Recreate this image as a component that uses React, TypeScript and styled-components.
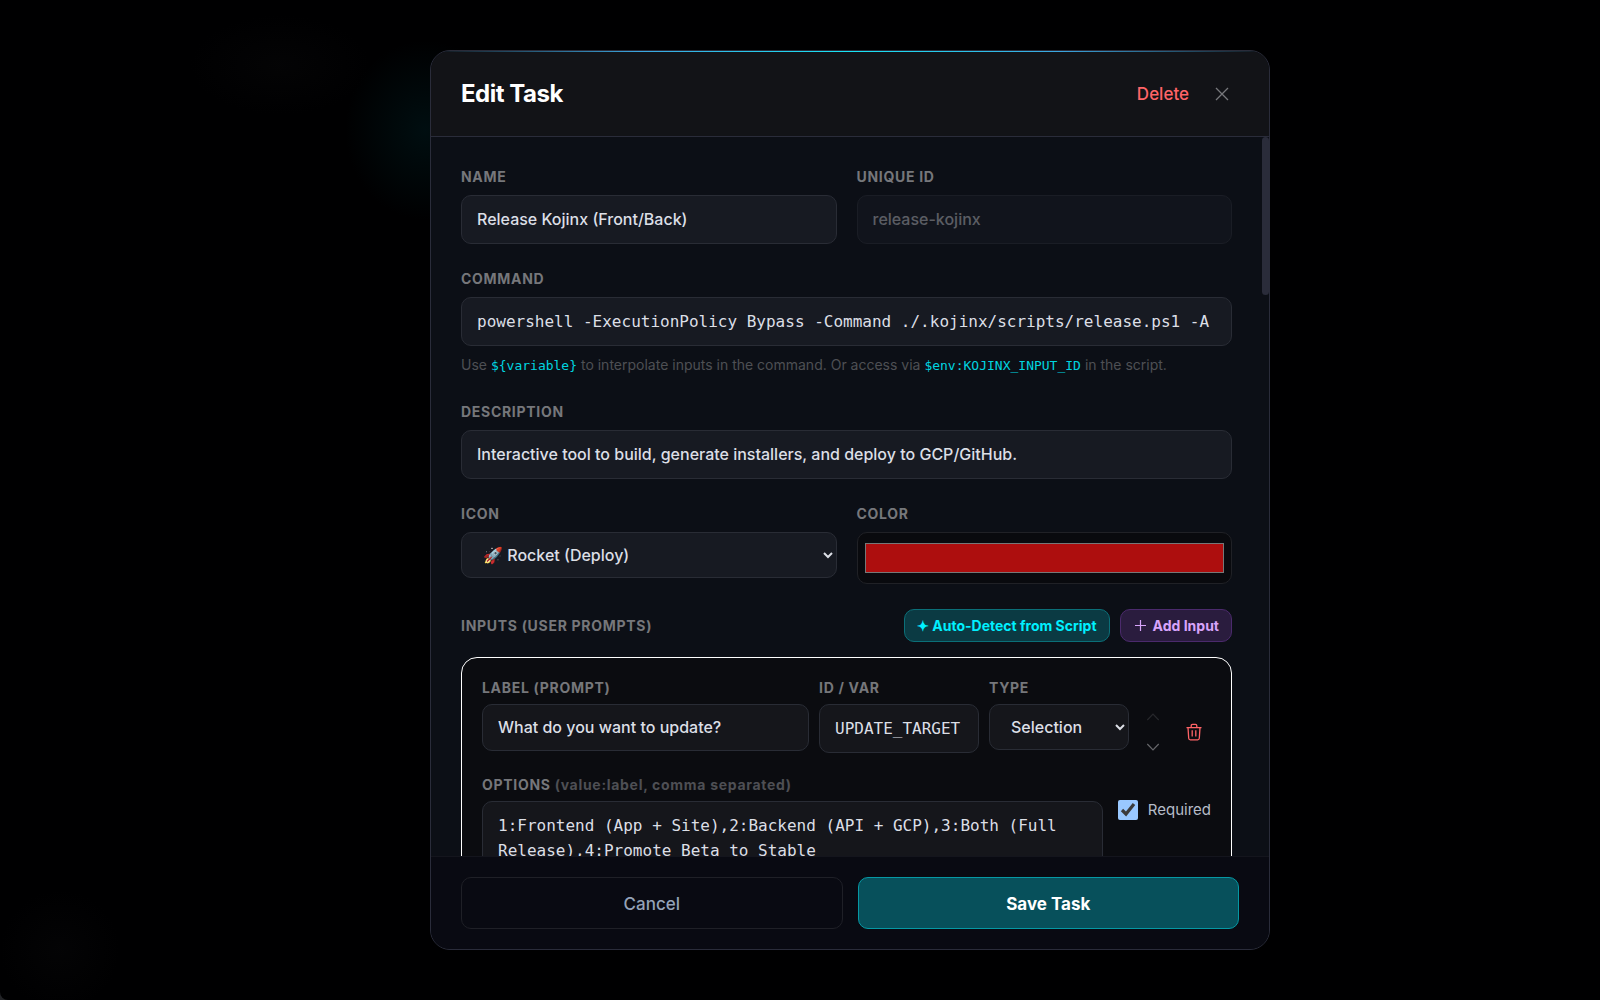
import React from "react";
import styled, { createGlobalStyle, css } from "styled-components";

const sans = `Inter, "Liberation Sans", sans-serif`;
const mono = `"DejaVu Sans Mono", "Liberation Mono", monospace`;

const GlobalStyle = createGlobalStyle`
  *, *::before, *::after { box-sizing: border-box; }
  html, body, #root { height: 100%; }
  body { margin: 0; background: #222326; font-family: ${sans}; color: #e2e4ea; overflow: hidden; }
  button, input, select, textarea { font-family: inherit; margin: 0; }
`;

const Overlay = styled.div`
  height: 100vh;
  padding-left: 100px;
  display: flex;
  align-items: center;
  justify-content: center;
  border-bottom-left-radius: 8px;
  background:
    radial-gradient(ellipse 80px 90px at 425px 130px, rgba(0, 50, 56, 0.28), transparent),
    radial-gradient(ellipse 90px 50px at 280px 65px, rgba(18, 18, 20, 0.2), transparent),
    radial-gradient(ellipse 60px 60px at 60px 950px, rgba(14, 14, 16, 0.25), transparent),
    #000001;
`;

const Modal = styled.form`
  width: min(840px, 100%);
  height: 90vh;
  display: flex;
  flex-direction: column;
  position: relative;
  overflow: hidden;
  border: 1px solid #2a2c3a;
  border-radius: 20px;
  background: #0c0f16;

  &::before {
    content: "";
    position: absolute;
    top: 0;
    left: 0;
    right: 0;
    height: 1px;
    background: linear-gradient(90deg, transparent, #3ba6e0 25%, #17e4f4 50%, #3ba6e0 75%, transparent);
  }
`;

const Header = styled.header`
  flex: none;
  height: 86px;
  padding: 0 37px 0 30px;
  display: flex;
  align-items: center;
  justify-content: space-between;
  background: #121317;
  border-bottom: 1px solid #2a2c3a;
`;

const Title = styled.h2`
  margin: 0;
  font-size: 24px;
  line-height: 32px;
  font-weight: 700;
  letter-spacing: -0.02em;
  color: #fff;
`;

const Row = styled.div<{ $gap?: number; $spread?: boolean }>`
  display: flex;
  align-items: center;
  justify-content: ${(p) => (p.$spread ? "space-between" : "flex-start")};
  gap: ${(p) => p.$gap ?? 10}px;
`;

const PlainButton = styled.button<{ $color: string }>`
  display: flex;
  align-items: center;
  justify-content: center;
  padding: 0;
  border: 0;
  background: none;
  font-size: 17px;
  font-weight: 500;
  color: ${(p) => p.$color};
`;

const BodyFrame = styled.div`
  flex: 1;
  min-height: 0;
  position: relative;
  display: flex;
`;

const Body = styled.div`
  flex: 1;
  min-width: 0;
  overflow-y: auto;
  scrollbar-width: none;
  padding: 30px 37px 30px 30px;
  display: flex;
  flex-direction: column;
  gap: 25px;

  & > * { flex: none; }
`;

const ScrollThumb = styled.div`
  position: absolute;
  top: 0;
  right: 0;
  width: 7px;
  height: 22%;
  border-radius: 4px;
  background: #2a2c3a;
`;

const TwoColumns = styled.div`
  display: grid;
  grid-template-columns: 1fr 1fr;
  gap: 20px;
  align-items: start;
`;

const Field = styled.div<{ $gap?: number }>`
  min-width: 0;
  display: flex;
  flex-direction: column;
  gap: ${(p) => p.$gap ?? 8}px;
`;

const labelText = css`
  font-size: 14px;
  line-height: 20px;
  font-weight: 700;
  letter-spacing: 0.05em;
  color: #76777b;
`;

const Label = styled.label`
  ${labelText}
`;

const Heading = styled.h3`
  ${labelText}
  margin: 0;
`;

const Muted = styled.span`
  color: #4e4f54;
`;

const control = css<{ $height?: number; $mono?: boolean; $inset?: boolean }>`
  width: 100%;
  height: ${(p) => p.$height ?? 49}px;
  padding: 0 15px;
  border: 1px solid #292c35;
  border-radius: 10px;
  outline: none;
  background: ${(p) => (p.$inset ? "#15161b" : "#171a22")};
  color: #dcdfe6;
  font-family: ${(p) => (p.$mono ? mono : sans)};
  font-size: 16px;
  font-weight: 500;
`;

const Input = styled.input`
  ${control}
  padding-bottom: ${(p) => (p.$mono ? 0 : 2)}px;
  &:disabled {
    opacity: 0.5;
    color: #a9abb1;
  }
`;

const Select = styled.select`
  ${control}
  padding: 0 4px 0 17px;
`;

const TextArea = styled.textarea`
  ${control}
  display: block;
  padding: 11px 15px;
  line-height: 25px;
  resize: none;
`;

const ColorInput = styled.input`
  width: 100%;
  height: 52px;
  padding: 6px 5px;
  border: 1px solid #202126;
  border-radius: 10px;
  background: #090a0e;
`;

const Hint = styled.p`
  margin: 0;
  font-size: 14px;
  line-height: 22px;
  color: #4e4f54;
`;

const Code = styled.code`
  font-family: ${mono};
  font-size: 13px;
  color: #00d5e0;
`;

const SmallButton = styled.button<{ $tone: "teal" | "purple" }>`
  height: 33px;
  padding: 0 12px;
  display: flex;
  align-items: center;
  gap: 5px;
  border: 1px solid ${(p) => (p.$tone === "teal" ? "#0b6f78" : "#4b2a6c")};
  border-radius: 10px;
  background: ${(p) => (p.$tone === "teal" ? "#0b3a43" : "#2a1c3e")};
  color: ${(p) => (p.$tone === "teal" ? "#00f0ff" : "#d8a4fb")};
  font-size: 14px;
  font-weight: 700;
`;

const PromptCard = styled.section`
  padding: 20px;
  display: flex;
  flex-direction: column;
  gap: 20px;
  border: 1px solid #fff;
  border-radius: 16px;
  background: #0b0c10;
`;

const PromptGrid = styled.div`
  display: grid;
  grid-template-columns: 1fr 160px 140px 28px 34px;
  column-gap: 10px;
  align-items: start;
`;

const Arrows = styled.div`
  padding-top: 31px;
  display: flex;
  flex-direction: column;
  align-items: center;
  gap: 14px;
`;

const TrashSlot = styled.div`
  padding-top: 45px;
  display: flex;
  justify-content: center;
`;

const OptionsGrid = styled.div`
  display: grid;
  grid-template-columns: 1fr auto;
  gap: 15px;
  align-items: start;
`;

const CheckLabel = styled.label`
  margin-top: 23px;
  display: flex;
  align-items: center;
  gap: 10px;
  font-size: 15px;
  line-height: 24px;
  color: #b6bcc8;
`;

const CheckBox = styled.input`
  width: 20px;
  height: 20px;
  color-scheme: dark;
  accent-color: #99c8ff;
`;

const Footer = styled.footer`
  flex: none;
  padding: 20px 30px;
  display: grid;
  grid-template-columns: 1fr 1fr;
  gap: 15px;
  border-top: 1px solid #14151d;
  background: #090a12;
`;

const FooterButton = styled.button<{ $primary?: boolean }>`
  height: 52px;
  padding: 2px 0 0;
  border: 1px solid ${(p) => (p.$primary ? "#0698a4" : "#1f2027")};
  border-radius: 10px;
  background: ${(p) => (p.$primary ? "#07505b" : "transparent")};
  color: ${(p) => (p.$primary ? "#fff" : "#94a3b8")};
  font-size: 17px;
  font-weight: ${(p) => (p.$primary ? 700 : 500)};
`;

const Icon = styled.svg.attrs({ fill: "none", stroke: "currentColor", "aria-hidden": true })`
  display: block;
  flex: none;
`;

const Chevron = ({ up }: { up?: boolean }) => (
  <Icon width="14" height="16" viewBox="0 0 14 16" strokeWidth="1.2">
    <path d={up ? "M1.3 11 7 5.2 12.7 11" : "M1.3 5 7 10.8 12.7 5"} />
  </Icon>
);

export default function App() {
  return (
    <>
      <GlobalStyle />
      <Overlay>
        <Modal role="dialog" aria-labelledby="title" onSubmit={(e) => e.preventDefault()}>
          <Header>
            <Title id="title">Edit Task</Title>
            <Row $gap={23}>
              <PlainButton type="button" $color="#ff6467">Delete</PlainButton>
              <PlainButton type="button" $color="#77787c" aria-label="Close">
                <Icon width="20" height="20" viewBox="0 0 20 20" strokeWidth="1.3">
                  <path d="M4 4 16 16M16 4 4 16" />
                </Icon>
              </PlainButton>
            </Row>
          </Header>

          <BodyFrame>
            <Body>
              <TwoColumns>
                <Field>
                  <Label htmlFor="name">NAME</Label>
                  <Input id="name" defaultValue="Release Kojinx (Front/Back)" />
                </Field>
                <Field>
                  <Label htmlFor="uid">UNIQUE ID</Label>
                  <Input id="uid" defaultValue="release-kojinx" disabled />
                </Field>
              </TwoColumns>

              <Field>
                <Label htmlFor="command">COMMAND</Label>
                <Input
                  id="command"
                  $mono
                  defaultValue="powershell -ExecutionPolicy Bypass -Command ./.kojinx/scripts/release.ps1 -A"
                />
                <Hint>
                  Use <Code>{"${variable}"}</Code> to interpolate inputs in the command. Or access via{" "}
                  <Code>$env:KOJINX_INPUT_ID</Code> in the script.
                </Hint>
              </Field>

              <Field>
                <Label htmlFor="description">DESCRIPTION</Label>
                <Input
                  id="description"
                  defaultValue="Interactive tool to build, generate installers, and deploy to GCP/GitHub."
                />
              </Field>

              <TwoColumns>
                <Field>
                  <Label htmlFor="icon">ICON</Label>
                  <Select id="icon" $height={46}>
                    <option>🚀 Rocket (Deploy)</option>
                  </Select>
                </Field>
                <Field>
                  <Label htmlFor="color">COLOR</Label>
                  <ColorInput id="color" type="color" defaultValue="#ad0e0e" />
                </Field>
              </TwoColumns>

              <Field $gap={15}>
                <Row $spread>
                  <Heading>INPUTS (USER PROMPTS)</Heading>
                  <Row>
                    <SmallButton type="button" $tone="teal">✦ Auto-Detect from Script</SmallButton>
                    <SmallButton type="button" $tone="purple">
                      <Icon width="15" height="15" viewBox="0 0 15 15" strokeWidth="1.2">
                        <path d="M7.5 2v11M2 7.5h11" />
                      </Icon>
                      Add Input
                    </SmallButton>
                  </Row>
                </Row>

                <PromptCard>
                  <PromptGrid>
                    <Field $gap={6}>
                      <Label htmlFor="prompt">LABEL (PROMPT)</Label>
                      <Input id="prompt" $inset $height={47} defaultValue="What do you want to update?" />
                    </Field>
                    <Field $gap={6}>
                      <Label htmlFor="var">ID / VAR</Label>
                      <Input id="var" $inset $mono defaultValue="UPDATE_TARGET" />
                    </Field>
                    <Field $gap={6}>
                      <Label htmlFor="type">TYPE</Label>
                      <Select id="type" $inset $height={46}>
                        <option>Selection</option>
                      </Select>
                    </Field>
                    <Arrows>
                      <PlainButton type="button" $color="#27282c" aria-label="Move up"><Chevron up /></PlainButton>
                      <PlainButton type="button" $color="#66676b" aria-label="Move down"><Chevron /></PlainButton>
                    </Arrows>
                    <TrashSlot>
                      <PlainButton type="button" $color="#ff6467" aria-label="Remove input">
                        <Icon width="18" height="18" viewBox="0 0 18 18" strokeWidth="1.3">
                          <path d="M1.5 4.6h15M6.2 4.6V2.7q0-1.3 1.3-1.3h3q1.3 0 1.3 1.3v1.9M3 4.6l.7 10.7q.1 1.5 1.6 1.5h7.4q1.5 0 1.6-1.5L15 4.6M7.2 7.3v6.2M10.8 7.3v6.2" />
                        </Icon>
                      </PlainButton>
                    </TrashSlot>
                  </PromptGrid>

                  <OptionsGrid>
                    <Field $gap={6}>
                      <Label htmlFor="options">
                        OPTIONS <Muted>(value:label, comma separated)</Muted>
                      </Label>
                      <TextArea
                        id="options"
                        $inset
                        $mono
                        $height={80}
                        defaultValue="1:Frontend (App + Site),2:Backend (API + GCP),3:Both (Full Release),4:Promote Beta to Stable"
                      />
                    </Field>
                    <CheckLabel>
                      <CheckBox type="checkbox" defaultChecked />
                      Required
                    </CheckLabel>
                  </OptionsGrid>
                </PromptCard>
              </Field>
            </Body>
            <ScrollThumb />
          </BodyFrame>

          <Footer>
            <FooterButton type="button">Cancel</FooterButton>
            <FooterButton type="submit" $primary>Save Task</FooterButton>
          </Footer>
        </Modal>
      </Overlay>
    </>
  );
}
